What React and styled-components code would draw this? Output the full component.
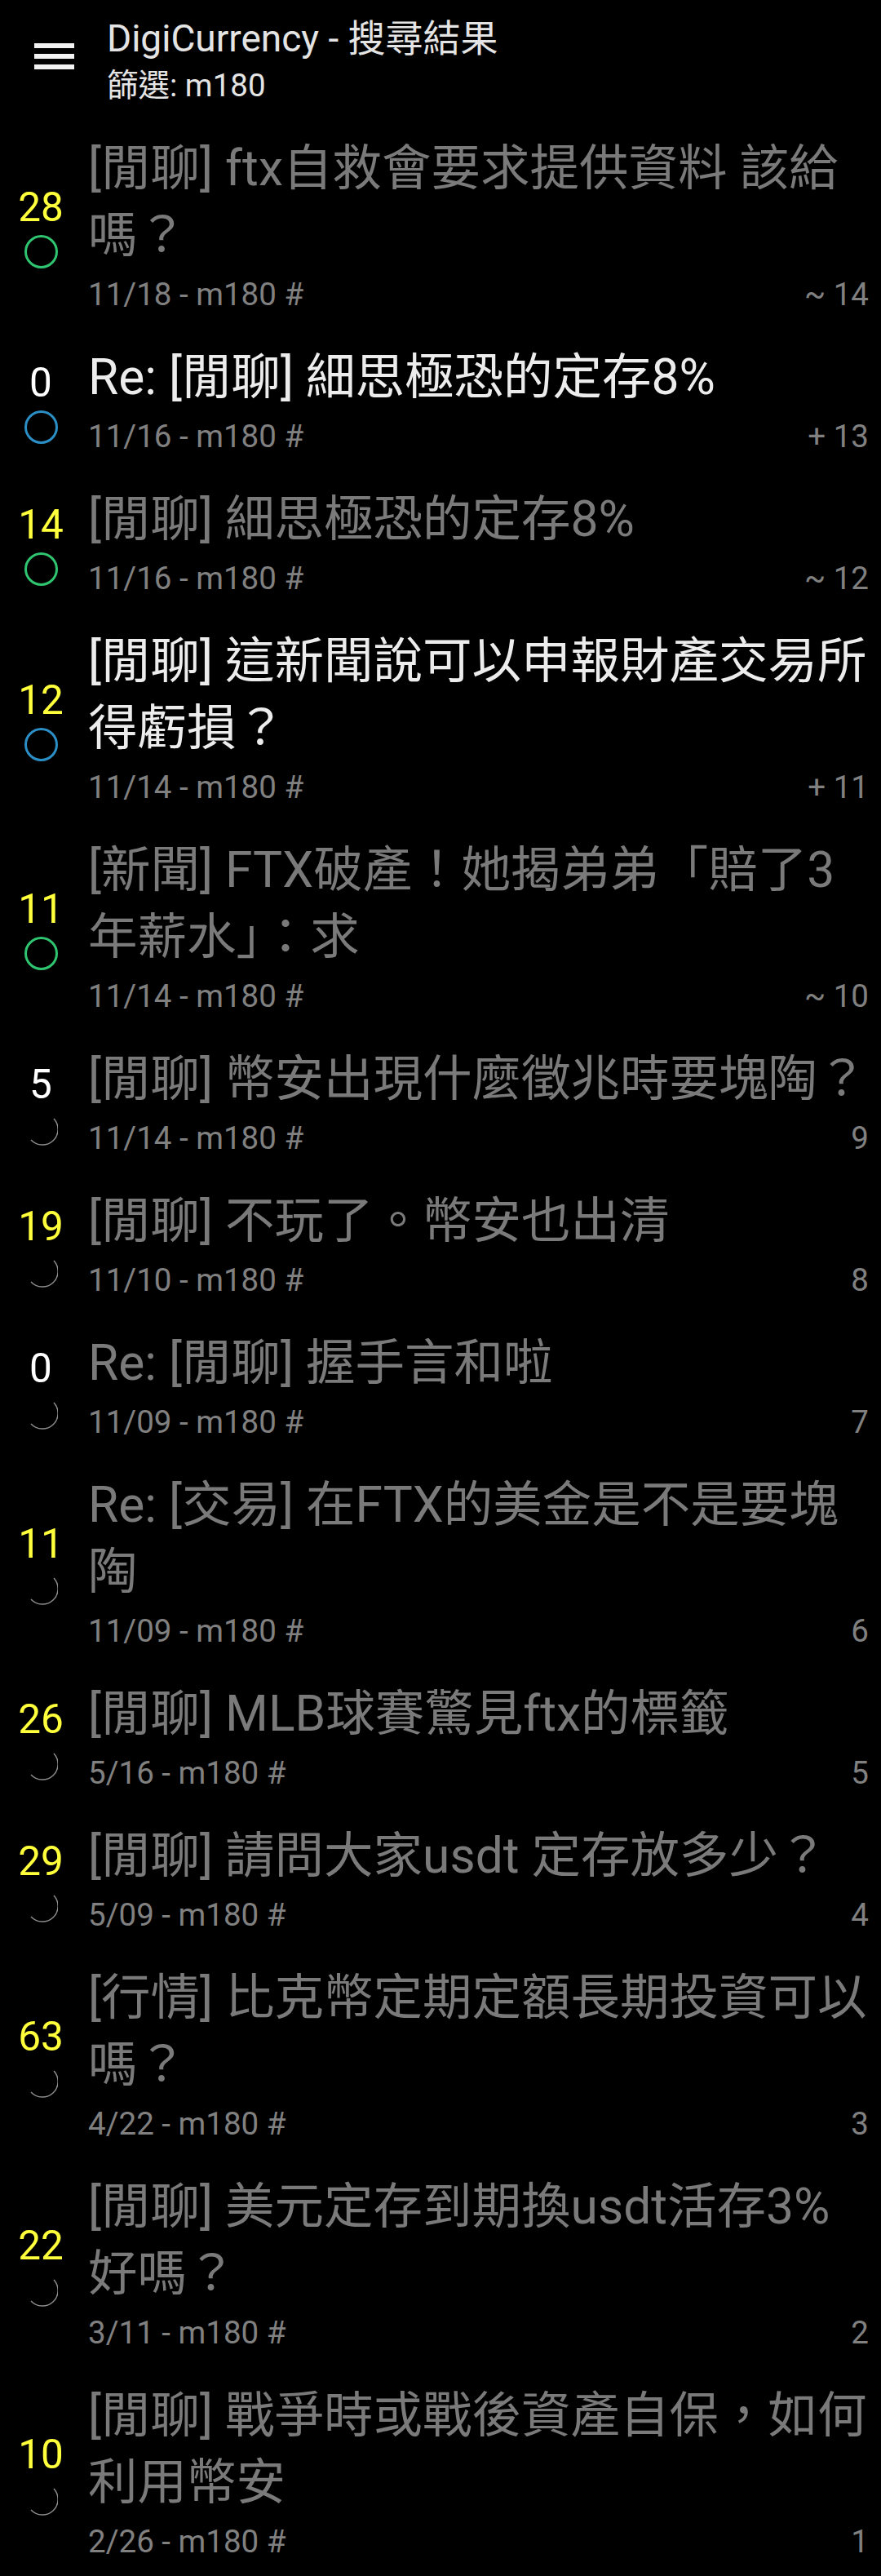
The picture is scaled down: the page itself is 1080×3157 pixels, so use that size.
import React from "react";
import styled, { createGlobalStyle } from "styled-components";

const GlobalStyle = createGlobalStyle`
  html, body {
    margin: 0;
    padding: 0;
    background: #000;
  }
  body {
    font-family: Roboto, "Noto Sans CJK TC", sans-serif;
    -webkit-font-smoothing: antialiased;
  }
`;

const Page = styled.div`
  width: 1080px;
  background: #000;
  color: #e6e6e6;
`;

const Toolbar = styled.header`
  height: 154px;
  display: flex;
  align-items: flex-start;
  box-sizing: border-box;
`;

const MenuButton = styled.div`
  width: 135px;
  height: 100%;
  display: flex;
  align-items: center;
  padding-left: 42px;
  box-sizing: border-box;
  margin-top: -8px;
`;

const TitleBlock = styled.div`
  padding-top: 21px;
  display: flex;
  flex-direction: column;
  gap: 8px;
  margin-left: -4px;
`;

const AppTitle = styled.div`
  font-size: 46px;
  line-height: 53px;
  color: #e4e4e4;
`;

const SubTitle = styled.div`
  font-size: 38.5px;
  line-height: 46px;
  color: #e4e4e4;
`;

const List = styled.div`
  display: flex;
  flex-direction: column;
`;

const Row = styled.div`
  display: flex;
  align-items: stretch;
  padding: 12px 0 23px;
`;

const Side = styled.div`
  width: 100px;
  flex-shrink: 0;
  display: flex;
  flex-direction: column;
  align-items: center;
  justify-content: center;
  gap: 5px;
`;

const Score = styled.div`
  font-size: 49.5px;
  line-height: 58px;
  color: ${(p) => (p.$hot ? "#ffff3c" : "#ffffff")};
`;

const Ring = styled.span`
  width: 41px;
  height: 41px;
  box-sizing: border-box;
  border-radius: 50%;
  border: 3px solid ${(p) => p.$color};
`;

const Body = styled.div`
  flex: 1;
  min-width: 0;
  padding-left: 8px;
`;

const Title = styled.div`
  width: 962px;
  font-size: 60.5px;
  line-height: 82px;
  color: ${(p) => (p.$read ? "#7a7a7a" : "#ececec")};
  word-break: break-all;
`;

const Meta = styled.div`
  display: flex;
  justify-content: space-between;
  margin-top: 5px;
  padding-right: 15px;
  font-size: 38.5px;
  line-height: 52px;
  color: #808080;
`;

const rows = [
  { score: 28, ring: "green", read: true, title: "[閒聊] ftx自救會要求提供資料 該給嗎？", date: "11/18", count: "~ 14" },
  { score: 0, ring: "blue", read: false, title: "Re: [閒聊] 細思極恐的定存8%", date: "11/16", count: "+ 13" },
  { score: 14, ring: "green", read: true, title: "[閒聊] 細思極恐的定存8%", date: "11/16", count: "~ 12" },
  { score: 12, ring: "blue", read: false, title: "[閒聊] 這新聞說可以申報財產交易所得虧損？", date: "11/14", count: "+ 11" },
  { score: 11, ring: "green", read: true, title: "[新聞] FTX破產！她揭弟弟「賠了3年薪水」：求", date: "11/14", count: "~ 10" },
  { score: 5, ring: "arc", read: true, title: "[閒聊] 幣安出現什麼徵兆時要塊陶？", date: "11/14", count: "9" },
  { score: 19, ring: "arc", read: true, title: "[閒聊] 不玩了。幣安也出清", date: "11/10", count: "8" },
  { score: 0, ring: "arc", read: true, title: "Re: [閒聊] 握手言和啦", date: "11/09", count: "7" },
  { score: 11, ring: "arc", read: true, title: "Re: [交易] 在FTX的美金是不是要塊陶", date: "11/09", count: "6" },
  { score: 26, ring: "arc", read: true, title: "[閒聊] MLB球賽驚見ftx的標籤", date: "5/16", count: "5" },
  { score: 29, ring: "arc", read: true, title: "[閒聊] 請問大家usdt 定存放多少？", date: "5/09", count: "4" },
  { score: 63, ring: "arc", read: true, title: "[行情] 比克幣定期定額長期投資可以嗎？", date: "4/22", count: "3" },
  { score: 22, ring: "arc", read: true, title: "[閒聊] 美元定存到期換usdt活存3%好嗎？", date: "3/11", count: "2" },
  { score: 10, ring: "arc", read: true, title: "[閒聊] 戰爭時或戰後資產自保，如何利用幣安", date: "2/26", count: "1" },
];

const ringColors = { green: "#2fc46f", blue: "#2b8fc6" };

function MenuIcon() {
  return (
    <svg width="50" height="33" viewBox="0 0 50 33">
      <rect x="0" y="0" width="49" height="6" fill="#f2f2f2" />
      <rect x="0" y="13" width="49" height="6" fill="#f2f2f2" />
      <rect x="0" y="26" width="49" height="6" fill="#f2f2f2" />
    </svg>
  );
}

function Arc() {
  return (
    <svg width="41" height="41" viewBox="0 0 41 41">
      <path d="M36 8 A19 19 0 0 1 8 34" fill="none" stroke="#8c8c8c" strokeWidth="1.5" />
    </svg>
  );
}

function Marker({ kind }) {
  if (kind === "arc") return <Arc />;
  return <Ring $color={ringColors[kind]} />;
}

export default function App() {
  return (
    <Page>
      <GlobalStyle />
      <Toolbar>
        <MenuButton>
          <MenuIcon />
        </MenuButton>
        <TitleBlock>
          <AppTitle>DigiCurrency - 搜尋結果</AppTitle>
          <SubTitle>篩選: m180</SubTitle>
        </TitleBlock>
      </Toolbar>
      <List>
        {rows.map((r, i) => (
          <Row key={i}>
            <Side>
              <Score $hot={r.score > 5}>{r.score}</Score>
              <Marker kind={r.ring} />
            </Side>
            <Body>
              <Title $read={r.read}>{r.title}</Title>
              <Meta>
                <span>{r.date} - m180 #</span>
                <span>{r.count}</span>
              </Meta>
            </Body>
          </Row>
        ))}
      </List>
    </Page>
  );
}
